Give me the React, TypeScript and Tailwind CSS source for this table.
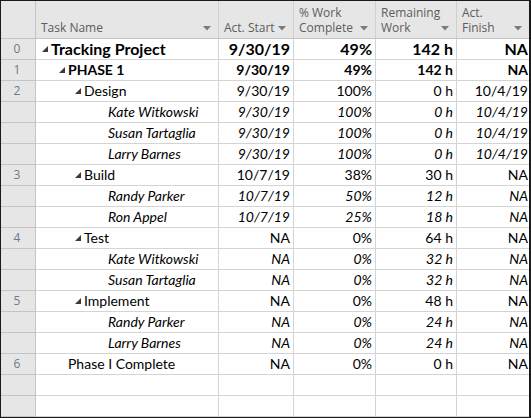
import React from "react";

type Row = {
  id?: string;
  name: string;
  level: number;
  toggle?: boolean;
  style?: "top" | "bold" | "italic" | "normal";
  start: string;
  pct: string;
  rem: string;
  finish: string;
};

const rows: Row[] = [
  { id: "0", name: "Tracking Project", level: 0, toggle: true, style: "top", start: "9/30/19", pct: "49%", rem: "142 h", finish: "NA" },
  { id: "1", name: "PHASE 1", level: 1, toggle: true, style: "bold", start: "9/30/19", pct: "49%", rem: "142 h", finish: "NA" },
  { id: "2", name: "Design", level: 2, toggle: true, start: "9/30/19", pct: "100%", rem: "0 h", finish: "10/4/19" },
  { name: "Kate Witkowski", level: 3, style: "italic", start: "9/30/19", pct: "100%", rem: "0 h", finish: "10/4/19" },
  { name: "Susan Tartaglia", level: 3, style: "italic", start: "9/30/19", pct: "100%", rem: "0 h", finish: "10/4/19" },
  { name: "Larry Barnes", level: 3, style: "italic", start: "9/30/19", pct: "100%", rem: "0 h", finish: "10/4/19" },
  { id: "3", name: "Build", level: 2, toggle: true, start: "10/7/19", pct: "38%", rem: "30 h", finish: "NA" },
  { name: "Randy Parker", level: 3, style: "italic", start: "10/7/19", pct: "50%", rem: "12 h", finish: "NA" },
  { name: "Ron Appel", level: 3, style: "italic", start: "10/7/19", pct: "25%", rem: "18 h", finish: "NA" },
  { id: "4", name: "Test", level: 2, toggle: true, start: "NA", pct: "0%", rem: "64 h", finish: "NA" },
  { name: "Kate Witkowski", level: 3, style: "italic", start: "NA", pct: "0%", rem: "32 h", finish: "NA" },
  { name: "Susan Tartaglia", level: 3, style: "italic", start: "NA", pct: "0%", rem: "32 h", finish: "NA" },
  { id: "5", name: "Implement", level: 2, toggle: true, start: "NA", pct: "0%", rem: "48 h", finish: "NA" },
  { name: "Randy Parker", level: 3, style: "italic", start: "NA", pct: "0%", rem: "24 h", finish: "NA" },
  { name: "Larry Barnes", level: 3, style: "italic", start: "NA", pct: "0%", rem: "24 h", finish: "NA" },
  { id: "6", name: "Phase I Complete", level: 4, start: "NA", pct: "0%", rem: "0 h", finish: "NA" },
];

// left padding of the name per outline level (4 = milestone without toggle)
const indent = ["pl-[6px]", "pl-[23px]", "pl-[39px]", "pl-[72px]", "pl-[32px]"];

const cols = "grid grid-cols-[35px_183px_75px_82px_81px_72px]";

const Arrow = () => (
  <svg width="8" height="5" viewBox="0 0 8 5" className="shrink-0">
    <polygon points="0,0 8,0 4,4.5" fill="#7a7a7a" />
  </svg>
);

const Toggle = () => (
  <svg width="6" height="6" viewBox="0 0 6 6" className="shrink-0 mr-[3px]">
    <polygon points="6,0 6,6 0,6" fill="#3a3a3a" />
  </svg>
);

const HeadCell = ({ lines, last }: { lines: string[]; last?: boolean }) => (
  <div className={`flex items-end justify-between pl-[5px] pr-[7px] pb-[3px] ${last ? "" : "border-r border-[#d0d0d0]"}`}>
    <div className="leading-[15px]">
      {lines.map((l) => (
        <div key={l}>{l}</div>
      ))}
    </div>
    <div className="pb-[4px]">
      <Arrow />
    </div>
  </div>
);

export default function App() {
  const empty = [0, 1];
  return (
    <div
      className="w-[531px] h-[418px] overflow-hidden bg-white border-l border-t border-b border-r-2 border-[#1a1a1a] text-black"
      style={{ fontFamily: "Lato, 'Open Sans', sans-serif" }}
    >
      <div
        className={`${cols} h-[38px] bg-[#e6e6e6] border-b border-[#c4c4c4] text-[12px] text-[#5c5c5c]`}
        style={{ fontFamily: "'Open Sans', 'Noto Sans', sans-serif" }}
      >
        <div className="border-r border-[#c4c4c4]" />
        <HeadCell lines={["Task Name"]} />
        <HeadCell lines={["Act. Start"]} />
        <HeadCell lines={["% Work", "Complete"]} />
        <HeadCell lines={["Remaining", "Work"]} />
        <HeadCell lines={["Act.", "Finish"]} last />
      </div>
      {rows.map((r, i) => {
        const font =
          r.style === "top"
            ? "font-bold text-[16px]"
            : r.style === "bold"
            ? "font-bold text-[14px]"
            : r.style === "italic"
            ? "italic text-[14px]"
            : "text-[14px]";
        return (
          <div key={i} className={`${cols} h-[21px] leading-[20px]`}>
            <div className="bg-[#e6e6e6] border-r border-b border-[#c4c4c4] text-center text-[12px] text-[#6b7a8c] pr-[2px]"
              style={{ fontFamily: "'Open Sans', 'Noto Sans', sans-serif" }}>
              {r.id}
            </div>
            <div className={`flex items-center border-r border-b border-[#d4d4d4] whitespace-nowrap ${indent[r.level]} ${font}`}>
              {r.toggle && <Toggle />}
              <span>{r.name}</span>
            </div>
            <div className={`text-right pr-[3px] border-r border-b border-[#d4d4d4] ${font}`}>{r.start}</div>
            <div className={`text-right pr-[3px] border-r border-b border-[#d4d4d4] ${font}`}>{r.pct}</div>
            <div className={`text-right pr-[3px] border-r border-b border-[#d4d4d4] ${font}`}>{r.rem}</div>
            <div className={`text-right pr-[1px] border-b border-[#d4d4d4] ${font}`}>{r.finish}</div>
          </div>
        );
      })}
      {empty.map((e) => (
        <div key={e} className={`${cols} h-[21px]`}>
          <div className="bg-[#e6e6e6] border-r border-b border-[#c4c4c4]" />
          <div className="border-r border-b border-[#d4d4d4]" />
          <div className="border-r border-b border-[#d4d4d4]" />
          <div className="border-r border-b border-[#d4d4d4]" />
          <div className="border-r border-b border-[#d4d4d4]" />
          <div className="border-b border-[#d4d4d4]" />
        </div>
      ))}
    </div>
  );
}
